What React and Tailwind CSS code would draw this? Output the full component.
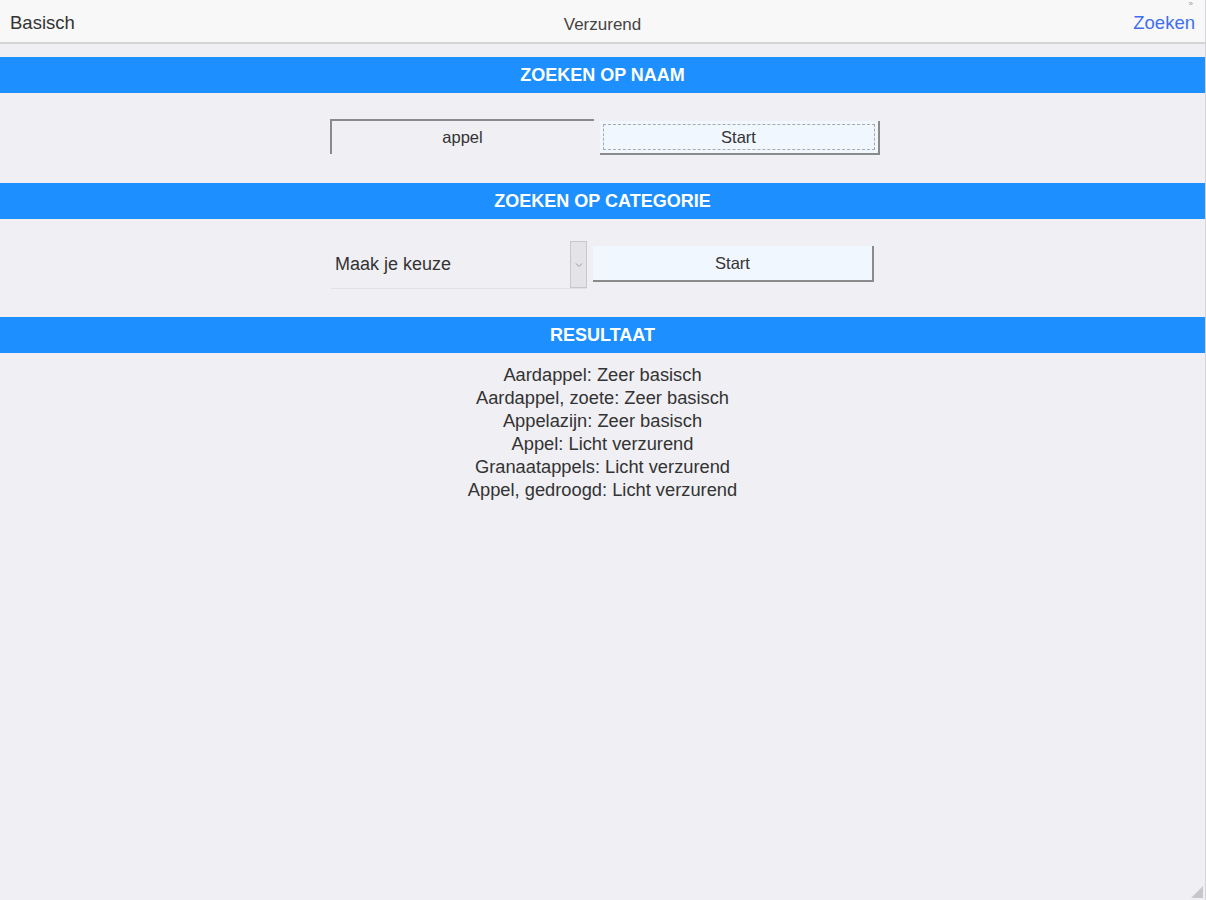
import React, { useState } from "react";

const results = [
  "Aardappel: Zeer basisch",
  "Aardappel, zoete: Zeer basisch",
  "Appelazijn: Zeer basisch",
  "Appel: Licht verzurend",
  "Granaatappels: Licht verzurend",
  "Appel, gedroogd: Licht verzurend",
];

function SectionBar({ children }) {
  return (
    <div className="h-[36px] bg-[#1e8fff] flex items-center justify-center text-white font-bold text-[18px]">
      {children}
    </div>
  );
}

export default function App() {
  const [query, setQuery] = useState("appel");

  return (
    <div
      className="relative h-[900px] w-full bg-[#efeff4] text-[#333] border-r border-[#d6d6da] overflow-hidden"
      style={{ fontFamily: "Arial, 'Liberation Sans', sans-serif" }}
    >
      {/* top navigation */}
      <div className="relative h-[44px] bg-[#f8f8f8] border-b-2 border-[#d4d4d4] flex items-center justify-between px-[10px] pt-[3px]">
        <span className="text-[18.5px] text-[#333]">Basisch</span>
        <span className="absolute left-1/2 top-[12px] -translate-x-1/2 text-[17px] text-[#444]">Verzurend</span>
        <span className="text-[18.5px] text-[#3f6ff0]">Zoeken</span>
        <span className="absolute right-[12px] top-0 text-[8px] leading-none text-[#999]">»</span>
      </div>

      <div className="h-[13px]" />
      <SectionBar>ZOEKEN OP NAAM</SectionBar>

      <div className="flex justify-center items-start gap-[6px] pt-[26px] pb-[28px] pl-[4px]">
        <input
          value={query}
          onChange={(e) => setQuery(e.target.value)}
          className="w-[264px] h-[35px] bg-[#efeff4] text-center text-[16.5px] text-[#333] border-t-2 border-l-2 border-[#8a8a8a] outline-none"
        />
        <button className="mt-[2px] w-[280px] h-[34px] bg-[#f0f7ff] border-r-2 border-b-2 border-[#8a8a8a] text-[16.5px] text-[#333] flex items-center justify-center p-[3px]">
          <span className="w-full h-full border border-dashed border-[#aaa] flex items-center justify-center">Start</span>
        </button>
      </div>

      <SectionBar>ZOEKEN OP CATEGORIE</SectionBar>

      <div className="flex justify-center items-start gap-[6px] pt-[22px] pb-[28px]">
        <div className="w-[256px] h-[48px] flex border-b border-[#e2e2e6]">
          <div className="flex-1 flex items-center pl-[4px] text-[18px] text-[#333]">Maak je keuze</div>
          <div className="w-[17px] h-[47px] bg-[#e4e4e8] border border-[#c8c8cc] flex items-center justify-center">
            <svg width="8" height="6" viewBox="0 0 8 6" fill="none">
              <path d="M1 1.5 L4 4.5 L7 1.5" stroke="#999" strokeWidth="1" />
            </svg>
          </div>
        </div>
        <button className="mt-[5px] w-[281px] h-[36px] bg-[#f0f7ff] border-r-2 border-b-2 border-[#8a8a8a] text-[16.5px] text-[#333]">
          Start
        </button>
      </div>

      <SectionBar>RESULTAAT</SectionBar>

      <div className="flex flex-col items-center pt-[10px] text-[18.3px] leading-[23px] text-[#333]">
        {results.map((r, i) => (
          <div key={i}>{r}</div>
        ))}
      </div>

      <svg className="absolute right-[2px] bottom-[2px]" width="12" height="12" viewBox="0 0 12 12">
        <path d="M12 0 L12 12 L0 12 Z" fill="#c8c8cc" />
      </svg>
    </div>
  );
}
